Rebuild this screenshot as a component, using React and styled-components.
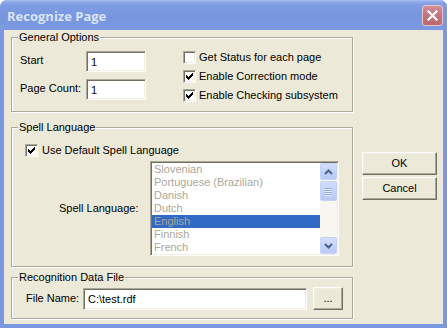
import React from "react";
import styled, { createGlobalStyle } from "styled-components";

const Global = createGlobalStyle`
  html, body { margin: 0; padding: 0; background: #ffffff; }
  * { box-sizing: border-box; }
`;

const FONT = `Tahoma, "Liberation Sans", Arial, sans-serif`;
const FACE = "#ECE9D8";

const Window = styled.div`
  width: 447px;
  height: 328px;
  display: flex;
  flex-direction: column;
  background: #7b97e0;
  border-radius: 7px 7px 0 0;
  overflow: hidden;
  font-family: ${FONT};
  font-size: 11px;
  color: #000;
`;

const TitleBar = styled.div`
  height: 30px;
  flex: none;
  display: flex;
  align-items: center;
  justify-content: space-between;
  padding: 0 4px 0 7px;
  background: linear-gradient(
    180deg,
    #a9c0f1 0px,
    #8ea9e9 2px,
    #7e9be2 5px,
    #7896df 60%,
    #7d9ae1 100%
  );
`;

const Title = styled.span`
  font-family: "Open Sans", "DejaVu Sans", sans-serif;
  font-weight: 700;
  font-size: 13px;
  color: #d8e4f8;
  margin-top: 1px;
`;

const CloseButton = styled.div`
  width: 21px;
  height: 21px;
  border-radius: 3px;
  border: 1px solid #e6c4ca;
  background: linear-gradient(180deg, #d29197 0%, #c4727a 50%, #bd6971 100%);
  display: flex;
  align-items: center;
  justify-content: center;
  margin-top: 1px;
`;

const Client = styled.div`
  flex: 1;
  margin: 0 4px 4px 4px;
  background: ${FACE};
  display: flex;
  padding-left: 7px;
`;

const MainColumn = styled.div`
  width: 342px;
  display: flex;
  flex-direction: column;
`;

const Group = styled.div`
  position: relative;
  margin-top: ${(p) => p.$mt}px;
  border: 1px solid #aca899;
  box-shadow: inset 1px 1px 0 #ffffff, 1px 1px 0 #ffffff;
  padding: ${(p) => p.$pad};
`;

const Legend = styled.span`
  position: absolute;
  top: -7px;
  left: 6px;
  padding: 0 1px;
  line-height: 13px;
  background: ${FACE};
  white-space: nowrap;
`;

const GeneralBody = styled.div`
  display: flex;
  align-items: flex-start;
`;

const FieldGrid = styled.div`
  display: grid;
  grid-template-columns: 66px 60px;
  grid-auto-rows: 21px;
  row-gap: 7px;
  align-items: center;
`;

const Label = styled.span`
  line-height: 13px;
  white-space: nowrap;
  width: ${(p) => (p.$w ? `${p.$w}px` : "auto")};
  margin-left: ${(p) => p.$ml || 0}px;
  padding-bottom: ${(p) => p.$lift || 0}px;
  flex: none;
`;

const TextBox = styled.input`
  width: ${(p) => p.$w}px;
  height: ${(p) => p.$h}px;
  margin: 0;
  padding: 0 0 0 4px;
  font-family: ${FONT};
  font-size: 11px;
  color: #000;
  background: #ffffff;
  border-style: solid;
  border-width: 1px;
  border-color: #aca899 #ffffff #ffffff #aca899;
  box-shadow: inset 1px 1px 0 #716f64, inset -1px -1px 0 #f1efe2;
  outline: none;
  flex: none;
`;

const CheckList = styled.div`
  display: flex;
  flex-direction: column;
  gap: 6px;
  margin-left: 37px;
`;

const CheckRow = styled.div`
  display: flex;
  align-items: center;
  gap: 3px;
  height: 13px;
  line-height: 13px;
  white-space: nowrap;
`;

const CheckText = styled.span`
  margin-left: ${(p) => p.$ml || 0}px;
`;

const CheckBoxBox = styled.span`
  width: 13px;
  height: 13px;
  flex: none;
  background: #ffffff;
  border-style: solid;
  border-width: 1px;
  border-color: #aca899 #ffffff #ffffff #aca899;
  box-shadow: inset 1px 1px 0 #716f64, inset -1px -1px 0 #f1efe2;
  position: relative;
  display: block;
`;

const CheckSvg = styled.svg`
  position: absolute;
  left: -1px;
  top: -1px;
`;

const CHECK_COLS = [
  [3, 5],
  [4, 6],
  [5, 7],
  [6, 6],
  [7, 5],
  [8, 4],
  [9, 3],
];

function CheckBox({ checked }) {
  return (
    <CheckBoxBox>
      {checked && (
        <CheckSvg width="13" height="13" viewBox="0 0 13 13" shapeRendering="crispEdges">
          {CHECK_COLS.map(([x, y]) => (
            <rect key={x} x={x} y={y} width="1" height="3" fill="#000" />
          ))}
        </CheckSvg>
      )}
    </CheckBoxBox>
  );
}

const ListRow = styled.div`
  display: flex;
  align-items: center;
  margin-top: 4px;
`;

const ListBox = styled.div`
  width: 189px;
  height: 95px;
  flex: none;
  display: flex;
  background: #ffffff;
  border-style: solid;
  border-width: 1px;
  border-color: #aca899 #ffffff #ffffff #aca899;
  box-shadow: inset 1px 1px 0 #716f64, inset -1px -1px 0 #f1efe2;
  padding: 1px;
`;

const Items = styled.div`
  flex: 1;
  overflow: hidden;
`;

const Item = styled.div`
  height: 13px;
  line-height: 13px;
  padding-left: 2px;
  color: #aca899;
  white-space: nowrap;
  background: ${(p) => (p.$selected ? "#316ac5" : "transparent")};
`;

const ScrollBar = styled.div`
  width: 17px;
  flex: none;
  display: flex;
  flex-direction: column;
  background: #f7f6f0;
`;

const ScrollButton = styled.div`
  width: 17px;
  height: ${(p) => p.$h}px;
  flex: none;
  border-radius: 2px;
  border: 1px solid #c4d3f7;
  background: linear-gradient(180deg, #d3defb 0%, #c3d3fb 50%, #b8caf5 100%);
  display: flex;
  align-items: center;
  justify-content: center;
  margin-top: ${(p) => p.$mt || 0}px;
`;

const Spacer = styled.div`
  flex: 1;
`;

const Grip = styled.div`
  width: 7px;
  display: flex;
  flex-direction: column;
  gap: 1px;
`;

const GripLine = styled.div`
  height: 1px;
  background: #8fa5dc;
  box-shadow: 0 1px 0 #eef2fd;
`;

const FileRow = styled.div`
  display: flex;
  align-items: center;
`;

const PushButton = styled.div`
  width: ${(p) => p.$w}px;
  height: 23px;
  flex: none;
  margin-left: ${(p) => p.$ml || 0}px;
  display: flex;
  align-items: center;
  justify-content: center;
  background: ${FACE};
  border-style: solid;
  border-width: 1px;
  border-color: #ffffff #716f64 #716f64 #ffffff;
  box-shadow: inset -1px -1px 0 #aca899, inset 1px 1px 0 #f1efe2;
  line-height: 13px;
`;

const ButtonColumn = styled.div`
  display: flex;
  flex-direction: column;
  gap: 2px;
  margin-left: 9px;
  margin-top: 122px;
`;

const LANGS = [
  "Slovenian",
  "Portuguese (Brazilian)",
  "Danish",
  "Dutch",
  "English",
  "Finnish",
  "French",
];

export default function App() {
  return (
    <>
      <Global />
      <Window>
        <TitleBar>
          <Title>Recognize Page</Title>
          <CloseButton>
            <svg width="11" height="11" viewBox="0 0 11 11">
              <path
                d="M1.5 1.5 L9.5 9.5 M9.5 1.5 L1.5 9.5"
                stroke="#ffffff"
                strokeWidth="2.2"
                strokeLinecap="square"
              />
            </svg>
          </CloseButton>
        </TitleBar>
        <Client>
          <MainColumn>
            <Group $mt={7} $pad="13px 0 9px 8px">
              <Legend>General Options</Legend>
              <GeneralBody>
                <FieldGrid>
                  <Label $lift={3}>Start</Label>
                  <TextBox $w={60} $h={21} readOnly value="1" />
                  <Label $lift={3}>Page Count:</Label>
                  <TextBox $w={60} $h={21} readOnly value="1" />
                </FieldGrid>
                <CheckList>
                  <CheckRow>
                    <CheckBox />
                    <CheckText>Get Status for each page</CheckText>
                  </CheckRow>
                  <CheckRow>
                    <CheckBox checked />
                    <CheckText>Enable Correction mode</CheckText>
                  </CheckRow>
                  <CheckRow>
                    <CheckBox checked />
                    <CheckText>Enable Checking subsystem</CheckText>
                  </CheckRow>
                </CheckList>
              </GeneralBody>
            </Group>

            <Group $mt={15} $pad="16px 0 10px 13px">
              <Legend>Spell Language</Legend>
              <CheckRow>
                <CheckBox checked />
                <CheckText $ml={1}>Use Default Spell Language</CheckText>
              </CheckRow>
              <ListRow>
                <Label $ml={34} $w={91}>Spell Language:</Label>
                <ListBox>
                  <Items>
                    {LANGS.map((l) => (
                      <Item key={l} $selected={l === "English"}>
                        {l}
                      </Item>
                    ))}
                  </Items>
                  <ScrollBar>
                    <ScrollButton $h={17}>
                      <svg width="9" height="6" viewBox="0 0 9 6">
                        <path d="M1 5 L4.5 1.5 L8 5" fill="none" stroke="#4d6185" strokeWidth="2" />
                      </svg>
                    </ScrollButton>
                    <ScrollButton $h={20} $mt={1}>
                      <Grip>
                        <GripLine />
                        <GripLine />
                        <GripLine />
                        <GripLine />
                      </Grip>
                    </ScrollButton>
                    <Spacer />
                    <ScrollButton $h={17}>
                      <svg width="9" height="6" viewBox="0 0 9 6">
                        <path d="M1 1 L4.5 4.5 L8 1" fill="none" stroke="#4d6185" strokeWidth="2" />
                      </svg>
                    </ScrollButton>
                  </ScrollBar>
                </ListBox>
              </ListRow>
            </Group>

            <Group $mt={10} $pad="9px 0 8px 14px">
              <Legend>Recognition Data File</Legend>
              <FileRow>
                <Label $w={57}>File Name:</Label>
                <TextBox $w={224} $h={22} readOnly value="C:\test.rdf" />
                <PushButton $w={30} $ml={6}>...</PushButton>
              </FileRow>
            </Group>
          </MainColumn>
          <ButtonColumn>
            <PushButton $w={75}>OK</PushButton>
            <PushButton $w={75}>Cancel</PushButton>
          </ButtonColumn>
        </Client>
      </Window>
    </>
  );
}
